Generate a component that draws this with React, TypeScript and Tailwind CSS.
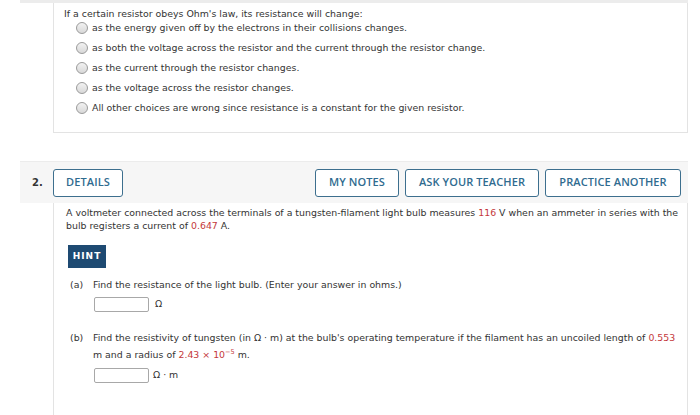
import React from "react";

const red = "text-[#c4383a]";

function Radio({ children }: { children: React.ReactNode }) {
  return (
    <div className="flex items-center h-[20px]">
      <span className="w-[12px] h-[12px] rounded-full border border-[#9a9a9a] bg-gradient-to-b from-[#f2f2f2] to-[#d8d8d8] mr-[4px] ml-[12px]" />
      <span>{children}</span>
    </div>
  );
}

function Btn({ children, w }: { children: React.ReactNode; w: string }) {
  return (
    <div
      className={`h-[28px] ${w} flex items-center justify-center border-[1.5px] border-[#3d6f8e] rounded-[3px] bg-white text-[#2f6b8f] text-[11px] font-semibold tracking-[0.1px]`}
      style={{ fontFamily: '"Open Sans", "Noto Sans", sans-serif' }}
    >
      {children}
    </div>
  );
}

function Box() {
  return <span className="inline-block w-[55px] h-[15px] border border-[#a8a8a8] rounded-[2px] bg-white" />;
}

export default function App() {
  return (
    <div
      className="w-[700px] h-[415px] bg-white overflow-hidden text-[#333] text-[9.4px]"
      style={{ fontFamily: '"DejaVu Sans", Verdana, sans-serif' }}
    >
      <div className="ml-[20px] w-[668px]">
        <div className="h-[3px] bg-[#ececec]" />
        <div className="ml-[33px] h-[130px] border-l border-r border-b border-[#e3e3e3] pl-[10px] pt-[4px]">
          <div className="h-[14px] leading-[14px]">If a certain resistor obeys Ohm's law, its resistance will change:</div>
          <div className="-mt-[3px]">
            <Radio>as the energy given off by the electrons in their collisions changes.</Radio>
            <Radio>as both the voltage across the resistor and the current through the resistor change.</Radio>
            <Radio>as the current through the resistor changes.</Radio>
            <Radio>as the voltage across the resistor changes.</Radio>
            <Radio>All other choices are wrong since resistance is a constant for the given resistor.</Radio>
          </div>
        </div>

        <div className="mt-[28px] h-[42px] bg-[#f6f6f6] border-t border-[#ececec] flex items-center">
          <div className="w-[33px] pl-[12px] font-bold text-[10px] text-[#333]">2.</div>
          <Btn w="w-[70px]">DETAILS</Btn>
          <div className="flex-1" />
          <Btn w="w-[84px]">MY NOTES</Btn>
          <div className="w-[6px]" />
          <Btn w="w-[134px]">ASK YOUR TEACHER</Btn>
          <div className="w-[6px]" />
          <Btn w="w-[136px]">PRACTICE ANOTHER</Btn>
          <div className="w-[7px]" />
        </div>

        <div className="ml-[33px] h-[220px] border-l border-r border-[#e3e3e3] pl-[12px] pr-[8px] pt-[3px]">
          <div className="leading-[13px]">
            A voltmeter connected across the terminals of a tungsten-filament light bulb measures <span className={red}>116</span> V when an ammeter in series with the bulb registers a current of <span className={red}>0.647</span> A.
          </div>
          <div className="mt-[13px] ml-[2px] w-[38px] h-[23px] bg-[#1e4a72] text-white font-bold text-[9px] tracking-[1px] flex items-center justify-center">
            HINT
          </div>
          <div className="mt-[10px] flex leading-[13px]">
            <span className="w-[27px] pl-[4px] shrink-0">(a)</span>
            <span>Find the resistance of the light bulb. (Enter your answer in ohms.)</span>
          </div>
          <div className="mt-[6px] ml-[28px] flex items-center gap-[6px] h-[15px]">
            <Box />
            <span>Ω</span>
          </div>
          <div className="mt-[17px] flex leading-[17px]">
            <span className="w-[27px] pl-[4px] shrink-0">(b)</span>
            <span>
              Find the resistivity of tungsten (in Ω · m) at the bulb's operating temperature if the filament has an uncoiled length of <span className={red}>0.553</span> m and a radius of{" "}
              <span className={red}>
                2.43 × 10<span className="relative -top-[4px] text-[6.5px]">−5</span>
              </span>{" "}
              m.
            </span>
          </div>
          <div className="mt-[3px] ml-[28px] flex items-center gap-[4px] h-[15px]">
            <Box />
            <span>Ω · m</span>
          </div>
        </div>
      </div>
    </div>
  );
}
